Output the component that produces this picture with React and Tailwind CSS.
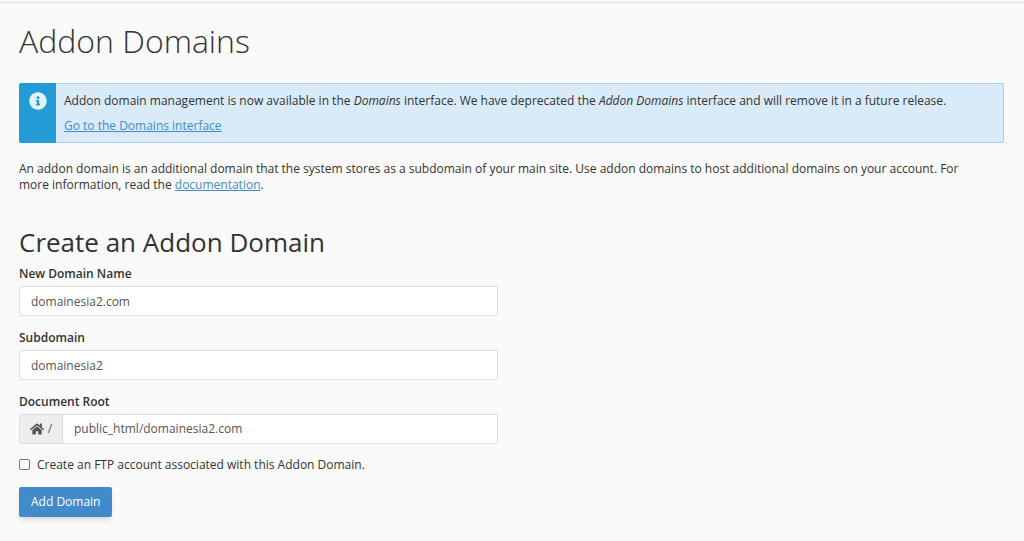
import { FaHome, FaInfoCircle } from "react-icons/fa";

const inputClass =
  "h-[30px] w-full rounded-[3px] border border-[#dddddd] bg-white px-[11px] text-[12px] text-[#555555] outline-none";

function Field({ id, label, children }) {
  return (
    <div>
      <label htmlFor={id} className="mb-1 block text-[12px] leading-[17px] font-semibold">
        {label}
      </label>
      {children}
    </div>
  );
}

export default function App() {
  return (
    <div className="min-h-screen bg-[#fafafa] font-['Open_Sans',sans-serif] text-[12px] text-[#333333]">
      <div className="h-[3px] border-b-2 border-[#ececec] bg-white shadow-xs" />
      <main className="pr-5 pb-6 pl-[19px]">
        <h1 className="pt-4 text-[32px] leading-[44px] font-light">Addon Domains</h1>
        <div className="mt-5 flex overflow-hidden rounded-[2px] bg-[#d9ebf8]">
          <div className="flex w-[37px] shrink-0 justify-center bg-[#239bd4] pt-[9px] text-[#e3f2fc]">
            <FaInfoCircle className="size-[18px]" />
          </div>
          <div className="flex-1 rounded-r-[2px] border border-l-0 border-[#a8d0e6] px-2 py-2 leading-[17px]">
            <p>
              Addon domain management is now available in the <em>Domains</em> interface. We have
              deprecated the <em>Addon Domains</em> interface and will remove it in a future release.
            </p>
            <a href="#domains" className="mt-2 inline-block text-[#428bca] underline">
              Go to the Domains interface
            </a>
          </div>
        </div>
        <p className="mt-[18px] pr-4 leading-4">
          An addon domain is an additional domain that the system stores as a subdomain of your main
          site. Use addon domains to host additional domains on your account. For more information,
          read the{" "}
          <a href="#documentation" className="text-[#428bca] underline">
            documentation
          </a>
          .
        </p>
        <h2 className="mt-[31px] text-[26px] leading-9">Create an Addon Domain</h2>
        <form className="mt-[5px]" onSubmit={(e) => e.preventDefault()}>
          <div className="grid grid-cols-2 gap-[27px]">
            <div className="flex flex-col gap-[13px]">
              <Field id="domain" label="New Domain Name">
                <input id="domain" className={inputClass} defaultValue="domainesia2.com" />
              </Field>
              <Field id="subdomain" label="Subdomain">
                <input id="subdomain" className={inputClass} defaultValue="domainesia2" />
              </Field>
              <Field id="root-dir" label="Document Root">
                <div className="flex h-[30px] overflow-hidden rounded-[3px] border border-[#dddddd] bg-white">
                  <span className="flex w-[43px] shrink-0 items-center justify-center gap-1 border-r border-[#dddddd] bg-[#eeeeee] text-[#555555]">
                    <FaHome className="size-[14px]" />/
                  </span>
                  <input
                    id="root-dir"
                    className="min-w-0 flex-1 px-[11px] text-[12px] text-[#555555] outline-none"
                    defaultValue="public_html/domainesia2.com"
                  />
                </div>
              </Field>
            </div>
          </div>
          <label className="mt-3 flex items-center gap-[7px] leading-[17px]">
            <input
              type="checkbox"
              className="size-[11px] appearance-none rounded-[2px] border border-[#767676] bg-white checked:bg-[#428bca]"
            />
            Create an FTP account associated with this Addon Domain.
          </label>
          <button className="mt-[14px] h-[30px] rounded-[2px] bg-[#428bca] px-3 text-[12px] text-white shadow-md">
            Add Domain
          </button>
        </form>
      </main>
    </div>
  );
}
